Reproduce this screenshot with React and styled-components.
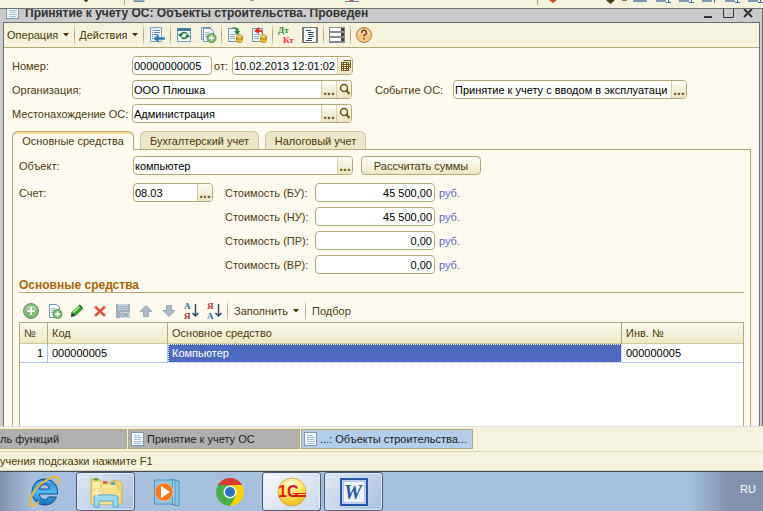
import React from "react";
import styled, { createGlobalStyle, css } from "styled-components";

const App = () => {
  return (
    <Page>
      <GlobalStyle />
      <TopStrip>
        <TopStripIcons />
      </TopStrip>

      <DocWindow>
        <TitleBar>
          <SheetIcon />
          <Title>Принятие к учету ОС: Объекты строительства. Проведен</Title>
          <WindowButton aria-label="Свернуть">
            <svg width="13" height="13">
              <path d="M2 11h8" stroke="#333" strokeWidth="2" />
            </svg>
          </WindowButton>
          <WindowButton aria-label="Развернуть">
            <svg width="13" height="13">
              <path d="M1.500 1v10.500h10V1" stroke="#333" fill="none" />
            </svg>
          </WindowButton>
          <WindowButton aria-label="Закрыть">
            <svg width="13" height="13">
              <path d="M2 3l8 8M10 3l-8 8" stroke="#333" strokeWidth="2" />
            </svg>
          </WindowButton>
        </TitleBar>

        <Frame>
          <Toolbar>
            <MenuButton>
              Операция <Caret />
            </MenuButton>
            <Separator />
            <MenuButton>
              Действия <Caret />
            </MenuButton>
            <Separator />
            <IconButton aria-label="Записать">
              <PostIcon />
            </IconButton>
            <Separator />
            <IconButton aria-label="Перечитать">
              <RefreshIcon />
            </IconButton>
            <IconButton aria-label="Скопировать">
              <CopyIcon />
            </IconButton>
            <Separator />
            <IconButton aria-label="Провести">
              <PostingIcon />
            </IconButton>
            <IconButton aria-label="Отменить проведение">
              <PostingIcon undo />
            </IconButton>
            <Separator />
            <IconButton aria-label="Проводки">
              <DtKtIcon />
            </IconButton>
            <IconButton aria-label="Структура">
              <StructureIcon />
            </IconButton>
            <Separator />
            <IconButton aria-label="Настройка">
              <RowsIcon />
            </IconButton>
            <Separator />
            <IconButton aria-label="Справка">
              <HelpIcon />
            </IconButton>
          </Toolbar>

          <Form>
            <Head>
              <Row>
                <Label htmlFor="number">Номер:</Label>
                <Field $w={80}>
                  <Input id="number" defaultValue="00000000005" />
                </Field>
                <SmallLabel htmlFor="date">от:</SmallLabel>
                <Field $w={121}>
                  <Input id="date" defaultValue="10.02.2013 12:01:02" />
                  <FieldButton aria-label="Календарь">
                    <CalendarIcon />
                  </FieldButton>
                </Field>
              </Row>
              <Row>
                <Label htmlFor="org">Организация:</Label>
                <Field $w={220}>
                  <Input id="org" defaultValue="ООО Плюшка" />
                  <Picker />
                  <Search />
                </Field>
                <EventLabel htmlFor="event">Событие ОС:</EventLabel>
                <Field $w={234}>
                  <Input
                    id="event"
                    defaultValue="Принятие к учету с вводом в эксплуатаци"
                  />
                  <Picker />
                </Field>
              </Row>
              <Row>
                <Label htmlFor="place">Местонахождение ОС:</Label>
                <Field $w={220}>
                  <Input id="place" defaultValue="Администрация" />
                  <Picker />
                  <Search />
                </Field>
              </Row>
            </Head>

            <Tabs role="tablist">
              <Tab role="tab" aria-selected="true" $w={122} $active>
                Основные средства
              </Tab>
              <Tab role="tab" $w={119}>
                Бухгалтерский учет
              </Tab>
              <Tab role="tab" $w={101}>
                Налоговый учет
              </Tab>
            </Tabs>

            <Panel>
              <Row>
                <PanelLabel htmlFor="object">Объект:</PanelLabel>
                <Field $w={220}>
                  <Input id="object" defaultValue="компьютер" />
                  <Picker />
                </Field>
                <Calculate>Рассчитать суммы</Calculate>
              </Row>

              <Costs>
                <Row>
                  <PanelLabel htmlFor="account">Счет:</PanelLabel>
                  <Field $w={80}>
                    <Input id="account" defaultValue="08.03" />
                    <Picker />
                  </Field>
                </Row>
                <CostList>
                  {costs.map((cost) => (
                    <Row key={cost.code}>
                      <CostLabel htmlFor={cost.code}>
                        Стоимость ({cost.code}):
                      </CostLabel>
                      <Field $w={120}>
                        <Input id={cost.code} defaultValue={cost.sum} $right />
                      </Field>
                      <Currency>руб.</Currency>
                    </Row>
                  ))}
                </CostList>
              </Costs>

              <Heading>Основные средства</Heading>

              <TableBar>
                <IconButton $small aria-label="Добавить">
                  <AddIcon />
                </IconButton>
                <IconButton $small aria-label="Добавить копированием">
                  <CopyIcon single />
                </IconButton>
                <IconButton $small aria-label="Изменить">
                  <PencilIcon />
                </IconButton>
                <IconButton $small aria-label="Удалить">
                  <DeleteIcon />
                </IconButton>
                <IconButton $small aria-label="Сохранить">
                  <SaveIcon />
                </IconButton>
                <IconButton $small aria-label="Вверх">
                  <ArrowIcon />
                </IconButton>
                <IconButton $small aria-label="Вниз">
                  <ArrowIcon down />
                </IconButton>
                <IconButton $small aria-label="По возрастанию">
                  <SortIcon top="А" bottom="Я" />
                </IconButton>
                <IconButton $small aria-label="По убыванию">
                  <SortIcon top="Я" bottom="А" />
                </IconButton>
                <Separator />
                <MenuButton>
                  Заполнить <Caret />
                </MenuButton>
                <Separator />
                <MenuButton>Подбор</MenuButton>
              </TableBar>

              <TableBox>
                <Table>
                  <colgroup>
                    <NumCol />
                    <CodeCol />
                    <col />
                    <InvCol />
                  </colgroup>
                  <thead>
                    <tr>
                      <Th>№</Th>
                      <Th>Код</Th>
                      <Th>Основное средство</Th>
                      <Th>Инв. №</Th>
                    </tr>
                  </thead>
                  <tbody>
                    <tr>
                      <Td $right>1</Td>
                      <Td>000000005</Td>
                      <Td $selected>Компьютер</Td>
                      <Td>000000005</Td>
                    </tr>
                  </tbody>
                </Table>
              </TableBox>
            </Panel>
          </Form>
        </Frame>
      </DocWindow>

      <WindowTabs>
        <WindowTab $w={127} $first>
          ль функций
        </WindowTab>
        <WindowTab $w={172}>
          <SheetIcon />
          Принятие к учету ОС
        </WindowTab>
        <WindowTab $w={172} $active>
          <SheetIcon />
          ...: Объекты строительства...
        </WindowTab>
      </WindowTabs>
      <StatusBar>учения подсказки нажмите F1</StatusBar>

      <Taskbar>
        <Task aria-label="Internet Explorer">
          <ExplorerIcon />
        </Task>
        <Task $open aria-label="Проводник">
          <FoldersIcon />
        </Task>
        <Task aria-label="Windows Media">
          <MediaIcon />
        </Task>
        <Task aria-label="Chrome">
          <ChromeIcon />
        </Task>
        <Task $open $bright aria-label="1С">
          <OneCIcon />
        </Task>
        <Task $open aria-label="Word">
          <WordIcon />
        </Task>
        <Lang>RU</Lang>
      </Taskbar>
    </Page>
  );
};

export default App;

const costs = [
  { code: "БУ", sum: "45 500,00" },
  { code: "НУ", sum: "45 500,00" },
  { code: "ПР", sum: "0,00" },
  { code: "ВР", sum: "0,00" },
];

const Picker = () => <FieldButton aria-label="Выбрать">...</FieldButton>;

const Search = () => (
  <FieldButton aria-label="Открыть">
    <svg width="13" height="13" fill="none" stroke="#6b5514">
      <circle cx="6" cy="5" r="3.500" strokeWidth="1.500" />
      <path d="M8.500 7.500l3 3.500" strokeWidth="2" />
    </svg>
  </FieldButton>
);

/* icons */

const Caret = () => (
  <svg width="6" height="4">
    <path d="M0 0h6L3 3.500z" fill="#4a3a0c" />
  </svg>
);

const TopStripIcons = () => (
  <svg width="763" height="8">
    <path d="M84 0h4l-2 2zM250 0h4" stroke="#5a4a2a" fill="#4a3a0c" />
    <path d="M124.500 0v5M537.500 0v5" stroke="#b5a878" />
    <path d="M134 0h10v1.500h-10z" fill="#c9d6e4" stroke="#6d86a5" />
    <path d="M349 0h5l-2.500 2z" fill="#d93a2b" />
    <path d="M345 1.500h14" stroke="#6d86a5" />
    <path d="M549 0h8l-4 3z" fill="#c8501c" />
    <path d="M606 0h9l-4.500 4z" fill="#4a3a0c" />
    <path d="M622 .5h5" stroke="#8c7b45" />
    <path
      d="M633 1h14M656 1h10M679 1h10M702 1h10M725 1h10M748 1h10"
      stroke="#8195b5"
      strokeWidth="2"
    />
    <path
      d="M668.500 0v2.500M691.500 0v2.500M714.500 0v2.500M737.500 0v2.500M760.500 0v2.500M666 2.500h5M689 2.500h5M735 2.500h5M758 2.500h5"
      stroke="#3d6fa5"
    />
  </svg>
);

const SheetIcon = () => (
  <svg width="13" height="14">
    <rect x=".5" y=".5" width="12" height="13" fill="#f4f8fb" stroke="#7d9ab5" />
    <path d="M3 3.500h6M3 5.500h8M3 7.500h7M3 9.500h8M3 11.500h7" stroke="#a5bdd0" />
  </svg>
);

const PostIcon = () => (
  <svg width="18" height="18">
    <path d="M2.500 1.500h11v14h-11z" fill="#eef5fa" stroke="#7f9fba" />
    <path
      d="M4 4.500h1M6 4.500h6M4 6.500h1M6 6.500h6M4 8.500h1M6 8.500h5M4 10.500h1M4 12.500h1"
      stroke="#5f87a8"
    />
    <path d="M5 12.500l6-4.500v3h6v3h-6v3z" fill="#2f78ac" stroke="#d7e8f4" strokeWidth=".5" />
  </svg>
);

const RefreshIcon = () => (
  <svg width="18" height="18">
    <path d="M2.500 3h13v12.500h-13z" fill="#f3f9fd" stroke="#6f93b4" />
    <path d="M2 3.500h14" stroke="#4779a5" strokeWidth="3" />
    <path
      d="M5.500 9a3.500 3 0 0 1 6-1.500M12.500 10a3.500 3 0 0 1-6 1.500"
      stroke="#217a35"
      strokeWidth="1.500"
      fill="none"
    />
    <path d="M3 8h5l-2.500 3.500zM10 11h5l-2.500-3.500z" fill="#217a35" />
  </svg>
);

const CopyIcon = ({ single }) => (
  <svg width="18" height="18">
    {!single && <path d="M2.500 1.500h9v12h-9z" fill="#e4eef5" stroke="#7595b0" />}
    <path d="M4.500 2.500h7l3 3v10h-10z" fill="#f5f9fc" stroke="#7595b0" />
    <path d="M6 6.500h4M6 8.500h4M6 10.500h3" stroke="#9eb8cc" />
    <circle cx="12.500" cy="12" r="4.500" fill="#7dbb74" stroke="#5a9455" />
    <path d="M12.500 9.500v5M10 12h5" stroke="#fff" strokeWidth="1.500" />
  </svg>
);

const PostingIcon = ({ undo }) => (
  <svg width="18" height="18">
    <path d="M2.500 2.500h10v13h-10z" fill="#f3f8fb" stroke="#7595b0" />
    <path d="M4 8.500h6M4 10.500h5M4 12.500h5" stroke="#8fabc2" />
    {undo ? (
      <path d="M4 5l5-4v2.500c3 0 4 1.500 4 5-1-2.500-2-2.500-4-2.500v2z" fill="#dd3022" />
    ) : (
      <path d="M6 1c4 0 6 1 6 4h2.500L11 9 8 5h2C10 3 8 2 6 1z" fill="#2b8a35" />
    )}
    <path d="M10.500 10.500v4c0 2.500 6 2.500 6 0v-4z" fill="#f1bd35" stroke="#c18a1c" />
    <ellipse cx="13.500" cy="10.500" rx="3" ry="1.500" fill="#fce58c" stroke="#c18a1c" />
    <path d="M10.500 12.500c0 1.500 6 1.500 6 0" stroke="#c18a1c" fill="none" />
  </svg>
);

const DtKtIcon = () => (
  <svg width="18" height="20">
    <IconText x="1" y="8" fill="#218a35">
      Дт
    </IconText>
    <IconText x="6" y="18" fill="#e8393a">
      Кт
    </IconText>
  </svg>
);

const StructureIcon = () => (
  <svg width="18" height="18">
    <rect x="2.500" y="1.500" width="13" height="15" fill="#fff" stroke="#777" />
    <path d="M2 1v16M16 1v16" stroke="#777" strokeWidth="2" />
    <path
      d="M5 4.500h5M7 6.500h6M7 8.500h5M8 10.500h5M7 12.500h4M5 14.500h6"
      stroke="#23536b"
    />
  </svg>
);

const RowsIcon = () => (
  <svg width="18" height="18">
    {[1, 6, 11].map((y) => (
      <g key={y}>
        <rect x="1.500" y={y + 0.5} width="15" height="4" fill="#fff" stroke="#888" />
        <rect x="13" y={y + 1} width="3" height="3" fill="#444" />
      </g>
    ))}
    <path d="M1 16.500h16" stroke="#888" />
  </svg>
);

const HelpIcon = () => (
  <svg width="18" height="18">
    <circle cx="9" cy="9" r="7.500" fill="#f8c583" stroke="#a87d55" />
    <path d="M3 8c1-6 11-6 12 0-4-2-8-2-12 0z" fill="#fde5c3" />
    <path
      d="M6.500 7c0-3.500 5-3.500 5-.5 0 2-2.500 2-2.500 4M9 12v1.500"
      fill="none"
      stroke="#6d431b"
      strokeWidth="1.500"
    />
  </svg>
);

const CalendarIcon = () => (
  <svg width="13" height="13">
    <path d="M4.500 1.500h7V9M2.500 3.500h7v8h-7z" fill="#fff7d6" stroke="#6b5514" />
    <path d="M2 5.500h9M2 7.500h9M2 9.500h8M4.500 3v9M7.500 3v9" stroke="#6b5514" />
  </svg>
);

const AddIcon = () => (
  <svg width="18" height="18">
    <circle cx="9" cy="9" r="7.500" fill="#7dbb74" stroke="#6f8f6c" />
    <path d="M3 8c1-6 11-6 12 0-4-2-8-2-12 0z" fill="#aed3a6" />
    <path d="M9 5v8M5 9h8" stroke="#fff" strokeWidth="2" />
  </svg>
);

const PencilIcon = () => (
  <svg width="18" height="18">
    <path d="M3.500 10l7-6.500 4 4-7 6.500z" fill="#3a9c2c" />
    <path d="M5 10.500l6.500-6" stroke="#9fe07f" strokeWidth="2" />
    <path d="M3.500 10l4 4L3 15z" fill="#1e3d18" />
    <path d="M10.500 3.500l1.500-1 3 3.500-.5 1.500z" fill="#176e1c" />
  </svg>
);

const DeleteIcon = () => (
  <svg width="18" height="18">
    <path d="M4 4.500l10 9.500M14 4.500L4 14" stroke="#e8695c" strokeWidth="3" />
    <path d="M5 5.500l8 7.500M13 5.500L5 13" stroke="#d93e31" />
  </svg>
);

const SaveIcon = () => (
  <svg width="18" height="18">
    <path d="M2 2h14v14H2z" fill="#9fb1c1" />
    <path d="M4 2h10v6H4z" fill="#c3cfd9" />
    <path d="M4 4.500h10M4 6.500h10" stroke="#9fb1c1" />
    <path d="M6 10h10v6H6z" fill="#ccd6de" />
    <OkText x="6" y="15">
      OK
    </OkText>
  </svg>
);

const ArrowIcon = ({ down }) => (
  <svg width="18" height="18">
    <path
      d={
        down
          ? "M6.500 3.500h5v5h3.500l-6 6-6-6h3.500z"
          : "M6.500 14.500h5v-5h3.500l-6-6-6 6h3.500z"
      }
      fill="#adb8c2"
      stroke="#9dabb7"
    />
  </svg>
);

const SortIcon = ({ top, bottom }) => (
  <svg width="18" height="20">
    <IconText x="1" y="8" fill={top === "А" ? "#276c98" : "#a33434"}>
      {top}
    </IconText>
    <IconText x="1" y="18" fill={bottom === "А" ? "#276c98" : "#a33434"}>
      {bottom}
    </IconText>
    <path
      d="M12.500 3v12M9.500 12l3 3 3-3"
      stroke="#304a66"
      fill="none"
      strokeWidth="1.500"
    />
  </svg>
);

const ExplorerIcon = () => (
  <svg width="34" height="34">
    <defs>
      <linearGradient id="ie" x1="0" y1="0" x2="0" y2="1">
        <stop offset="0" stopColor="#2a7cc9" />
        <stop offset=".5" stopColor="#4fb9ef" />
        <stop offset="1" stopColor="#1668b8" />
      </linearGradient>
    </defs>
    <path
      d="M17.500 4C10 4 5 10 5 17s5 13 12.500 13c6 0 10-3 12-8h-8c-1 2-2 2.500-4 2.500-3 0-5-2-5-5.500h18C31 10 26 4 17.500 4zM12.500 14c.5-3 2.500-4.500 5-4.500s4.500 1.500 5 4.500z"
      fill="url(#ie)"
      fillRule="evenodd"
      stroke="#164f8f"
    />
    <path d="M9 11c3-5 11-6 15-3" fill="none" stroke="#a8dcf6" />
    <path
      d="M12 27C3 34 0 30 5 20 11 8 27-1 31 3c1 1 1 3 0 6"
      fill="none"
      stroke="#efb52e"
      strokeWidth="2"
    />
  </svg>
);

const FoldersIcon = () => (
  <svg width="34" height="34">
    <path d="M2 29V4h8l2 3h11V6h8l2 3v20z" fill="#f1d777" stroke="#d0b050" />
    <path d="M4 7h14v20H4z" fill="#fbefb0" />
    <path d="M12 9h15l2 2v17H12z" fill="#fae798" stroke="#d5b554" />
    <path d="M3 13h22l6 3v13H3z" fill="#f7e08d" />
    <path d="M5 4.500h4" stroke="#28a745" strokeWidth="2" />
    <path d="M14 7.500h4" stroke="#d24b32" strokeWidth="2" />
    <path d="M22 8.500h4" stroke="#2d91d8" strokeWidth="2" />
    <path
      d="M5 32V22c0-3 24-3 24 0v10h-5v-6H10v6z"
      fill="#9ed8ef"
      stroke="#57a8ca"
    />
    <path d="M8 14v8M4 18h8" stroke="#fffce8" />
  </svg>
);

const MediaIcon = () => (
  <svg width="34" height="34">
    <path d="M23 5l5 1v25l-5-1z" fill="#8dc3e2" stroke="#4a92be" />
    <path d="M19 4l5 1v25l-5-1z" fill="#a9d5ec" stroke="#4a92be" />
    <path d="M3.500 5h18v24h-18z" fill="#8fc4e4" stroke="#4e93bf" />
    <circle cx="13" cy="17" r="9" fill="#f07a22" stroke="#f7b27b" />
    <path d="M10 11l9 6-9 6z" fill="#fff" />
  </svg>
);

const ChromeIcon = () => (
  <svg width="34" height="34">
    <path d="M17 17L4.900 10A14 14 0 0 1 29.100 10z" fill="#d93a32" />
    <path d="M17 17L29.100 10A14 14 0 0 1 17 31z" fill="#fbd20c" />
    <path d="M17 17L17 31A14 14 0 0 1 4.900 10z" fill="#4bae4b" />
    <path d="M17 10h12.100L23 20.500z" fill="#fbd20c" />
    <path d="M23 20.500L17 31l-6-10.500z" fill="#4bae4b" />
    <path d="M11 20.500L4.900 10l4-4L17 10z" fill="#4bae4b" />
    <path d="M17 10h-7.500L4.900 10A14 14 0 0 1 29.100 10z" fill="#d93a32" />
    <circle cx="17" cy="17" r="6.500" fill="#f4f7fa" />
    <circle cx="17" cy="17" r="5" fill="#2873b8" />
  </svg>
);

const OneCIcon = () => (
  <svg width="34" height="34">
    <defs>
      <radialGradient id="gold" cx=".5" cy=".2" r=".9">
        <stop offset="0" stopColor="#fffce0" />
        <stop offset=".5" stopColor="#ffe34f" />
        <stop offset="1" stopColor="#e9a90f" />
      </radialGradient>
    </defs>
    <circle cx="17" cy="17" r="14" fill="url(#gold)" stroke="#d9ac55" />
    <LogoText x="3" y="22">
      1С
    </LogoText>
    <path d="M17 21h14" stroke="#e21d1a" strokeWidth="2" />
    <path d="M18 18.500h13" stroke="#e21d1a" />
  </svg>
);

const WordIcon = () => (
  <svg width="34" height="34">
    <rect x="4" y="4" width="26" height="26" fill="#fff" stroke="#2a55a5" strokeWidth="2" />
    <rect x="6" y="6" width="22" height="22" fill="#eef3fb" stroke="#7f9ed4" />
    <WordText x="7" y="24">
      W
    </WordText>
  </svg>
);

/* styles */

const GlobalStyle = createGlobalStyle`
  * {
    box-sizing: border-box;
  }
  body {
    margin: 0;
    font-family: "Liberation Sans", Arial, sans-serif;
    font-size: 11px;
    line-height: 14px;
    color: #4a3a0c;
  }
  button, input {
    font: inherit;
    color: inherit;
    margin: 0;
    padding: 0;
    border: none;
    background: none;
  }
  svg {
    display: block;
    flex: none;
  }
`;

const IconText = styled.text`
  font-family: "Liberation Serif", serif;
  font-size: 9px;
  font-weight: bold;
`;
const OkText = styled.text`
  font-size: 6px;
  font-weight: bold;
  fill: #7f93a5;
`;
const LogoText = styled.text`
  font-size: 16px;
  font-weight: bold;
  fill: #e21d1a;
`;
const WordText = styled.text`
  font-family: "Liberation Serif", serif;
  font-size: 20px;
  font-weight: bold;
  font-style: italic;
  fill: #2a55a5;
`;

const Page = styled.div`
  min-height: 100vh;
  display: flex;
  flex-direction: column;
  overflow: hidden;
  background-color: #f5f2dd;
`;

const TopStrip = styled.div`
  height: 8px;
  overflow: hidden;
`;

const DocWindow = styled.div`
  flex: 1;
  display: flex;
  flex-direction: column;
  padding: 0 2px 0 3px;
  background-color: #cbcbcb;
  border-top: 1px solid #707070;
  border-right: 1px solid #707070;
`;

const TitleBar = styled.div`
  height: 13px;
  display: flex;
  align-items: flex-end;
  gap: 6px;
  padding: 0 4px 3px 3px;
  overflow: hidden;
`;
const Title = styled.div`
  flex: 1;
  font-size: 12px;
  font-weight: bold;
  line-height: 12px;
  color: #333;
  white-space: nowrap;
`;
const WindowButton = styled.button`
  width: 14px;
`;

const Frame = styled.div`
  flex: 1;
  display: flex;
  flex-direction: column;
  border: 1px solid #707070;
  border-bottom: none;
  background-color: #fffaf0;
`;

const Toolbar = styled.div`
  height: 25px;
  display: flex;
  align-items: center;
  background-color: #f5f2dd;
  border-bottom: 1px solid #b5a878;
`;

const MenuButton = styled.button`
  height: 22px;
  padding: 0 4px 0 3px;
  display: flex;
  align-items: center;
  gap: 5px;
  white-space: nowrap;
`;

const Separator = styled.div`
  width: 1px;
  height: 20px;
  margin: 0 1px;
  background: linear-gradient(#e6dfc0, #a99c70, #e6dfc0);
`;

const IconButton = styled.button`
  width: ${(p) => (p.$small ? 23 : 24)}px;
  height: 22px;
  display: flex;
  align-items: center;
  justify-content: center;
`;

const Form = styled.div`
  flex: 1;
  display: flex;
  flex-direction: column;
  padding: 8px 8px 0;
`;

const Head = styled.div`
  display: flex;
  flex-direction: column;
  gap: 5px;
`;

const Row = styled.div`
  display: flex;
  align-items: center;
`;

const Label = styled.label`
  width: 120px;
  white-space: nowrap;
`;
const PanelLabel = styled(Label)`
  width: 114px;
`;
const CostLabel = styled(Label)`
  width: 90px;
`;
const SmallLabel = styled.label`
  width: 20px;
  padding-left: 2px;
`;
const EventLabel = styled(Label)`
  width: 101px;
  padding-left: 23px;
`;

const Field = styled.div`
  width: ${(p) => p.$w}px;
  height: 19px;
  display: flex;
  overflow: hidden;
  background-color: #fff;
  border: 1px solid #b5a878;
  border-radius: 4px;
`;

const Input = styled.input`
  flex: 1;
  min-width: 0;
  padding: 0 0 0 1px;
  color: #000;
  outline: none;

  ${(p) =>
    p.$right &&
    css`
      padding-right: 2px;
      text-align: right;
    `}
`;

const FieldButton = styled.button`
  width: 15px;
  display: flex;
  align-items: center;
  justify-content: center;
  font-size: 14px;
  font-weight: bold;
  color: #6b5514;
  background: linear-gradient(#fdfcf4, #eae4c4);
  border-left: 1px solid #d6cda6;
`;

const Tabs = styled.div`
  display: flex;
  gap: 6px;
  margin-top: 8px;
`;

const Tab = styled.button`
  width: ${(p) => p.$w}px;
  height: 18px;
  background-color: #ece6cb;
  border: 1px solid #cfc7a0;
  border-bottom: none;
  border-radius: 6px 6px 0 0;
  white-space: nowrap;

  ${(p) =>
    p.$active &&
    css`
      height: 19px;
      margin-bottom: -1px;
      padding-bottom: 1px;
      z-index: 1;
      background: linear-gradient(#fbdc96 2px, #fffaf0 2px);
      border-color: #b5a878;
    `}
`;

const Panel = styled.div`
  flex: 1;
  display: flex;
  flex-direction: column;
  padding: 6px 6px 0;
  border: 1px solid #b5a878;
  border-bottom: none;
`;

const Calculate = styled.button`
  width: 120px;
  height: 19px;
  margin-left: 8px;
  background: linear-gradient(#fffef8, #ece6c8);
  border: 1px solid #b5a878;
  border-radius: 4px;
`;

const Costs = styled.div`
  display: flex;
  align-items: flex-start;
  gap: 12px;
  margin-top: 8px;
`;
const CostList = styled(Head)``;
const Currency = styled.span`
  padding-left: 4px;
  color: #5a6cc0;
`;

const Heading = styled.div`
  margin-top: 4px;
  font-size: 12px;
  font-weight: bold;
  color: #a86400;
  border-bottom: 1px solid #b5a878;
`;

const TableBar = styled.div`
  height: 29px;
  padding-top: 6px;
  display: flex;
  align-items: center;

  ${MenuButton} {
    padding: 0 5px;
  }
`;

const TableBox = styled.div`
  flex: 1;
  background-color: #fff;
  border: 1px solid #b5a878;
  border-bottom: none;
`;

const Table = styled.table`
  width: 100%;
  table-layout: fixed;
  border-collapse: separate;
  border-spacing: 0;
`;
const NumCol = styled.col`
  width: 28px;
`;
const CodeCol = styled.col`
  width: 120px;
`;
const InvCol = styled.col`
  width: 121px;
`;

const Th = styled.th`
  height: 21px;
  padding: 0 4px;
  text-align: left;
  font-weight: normal;
  background: linear-gradient(#fafaf0, #eee7c6);
  border-bottom: 1px solid #cfc7a0;
  border-right: 1px solid #b5a878;
  &:last-child {
    border-right: none;
  }
`;

const Td = styled.td`
  height: 19px;
  padding: 0 4px;
  color: #000;
  text-align: ${(p) => (p.$right ? "right" : "left")};
  border-bottom: 1px solid #a8c4e6;
  border-right: 1px solid #a8c4e6;
  &:last-child {
    border-right: none;
  }

  ${(p) =>
    p.$selected &&
    css`
      color: #fff;
      background-color: #4f69bf;
      outline: 1px dotted #fff;
      outline-offset: -1px;
    `}
`;

const WindowTabs = styled.div`
  height: 25px;
  padding-top: 2px;
  display: flex;
  align-items: flex-start;
  gap: 1px;
  border-top: 1px solid #dedede;
`;

const WindowTab = styled.button`
  width: ${(p) => p.$w}px;
  height: 20px;
  padding: 0 2px;
  display: flex;
  align-items: center;
  gap: 3px;
  white-space: nowrap;
  color: #222;
  background-color: ${(p) => (p.$active ? "#b4cde8" : "#b0b0b0")};
  border: 1px solid #b5a878;
  ${(p) =>
    p.$first &&
    css`
      padding: 0;
      border-left: none;
    `}
`;

const StatusBar = styled.div`
  height: 20px;
  line-height: 19px;
  border-top: 1px solid #d9d5b8;
  box-shadow: inset 0 -1px #d9d5b8;
`;

const Taskbar = styled.div`
  height: 40px;
  padding: 0 7px 0 14px;
  display: flex;
  gap: 3px;
  background: linear-gradient(
    to right,
    #8293ab,
    #a6bfdc 32px,
    #a6bfdc calc(100% - 74px),
    #8293ab calc(100% - 35px)
  );
  border-top: 1px solid #454c5c;
`;

const Task = styled.button`
  width: 59px;
  display: flex;
  align-items: center;
  justify-content: center;
  ${(p) =>
    p.$open &&
    css`
      background: linear-gradient(
        135deg,
        ${p.$bright ? "#f5f8fc, #c9d8ea" : "#dfe8f3, #a9c1de"}
      );
      border: 1px solid #4c5a70;
      border-radius: 3px;
      box-shadow: inset 0 0 0 1px #dfe8f3;
    `}
`;

const Lang = styled.div`
  margin-left: auto;
  line-height: 34px;
  color: #fff;
`;
